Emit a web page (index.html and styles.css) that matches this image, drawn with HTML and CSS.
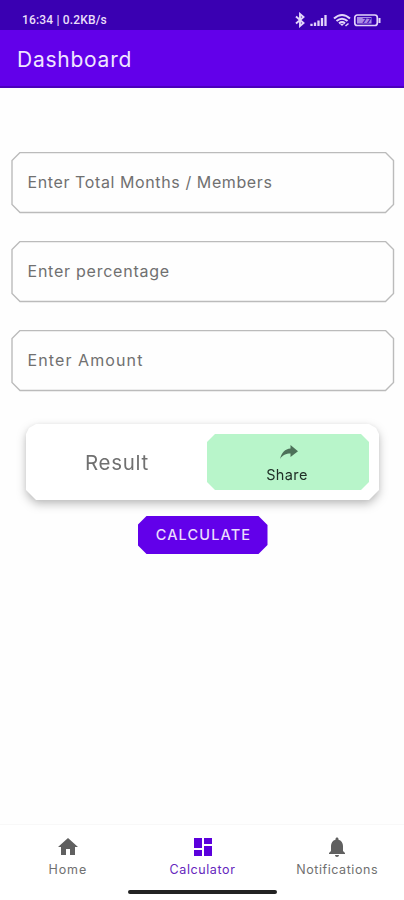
FILE: index.html
```html
<!DOCTYPE html>
<html lang="en">
<head>
<meta charset="utf-8">
<title>Dashboard</title>
<link rel="stylesheet" href="styles.css">
</head>
<body>
<header>
  <div class="status">
    <span>16:34 | 0.2KB/s</span>
    <svg class="indicators" width="90" height="16" viewBox="0 0 90 16" fill="none" stroke="#e2d5fa">
      <path d="M4 4.500 11.500 11 8 14V2L11.500 5 4 11.500" stroke-width="1.900"/>
      <path d="M19.500 14v-2.200M23 14V10.500M26.500 14V8.500M30 14V6M33.500 14V3" stroke-width="2.300"/>
      <path d="M42 6.500Q50-.5 58 6.500M44.500 9Q50 4.500 55.500 9M47 11.300Q50 9 53 11.300" stroke-width="2.100"/>
      <path d="M48 12h4l-2 2z" fill="#e2d5fa" stroke="none"/>
      <path d="M53.500 14l3-2.500" stroke-width="1.500"/>
      <rect x="62.800" y="3" width="22.500" height="10.500" rx="2.500" stroke-width="1.700"/>
      <rect x="65" y="5" width="14.500" height="6.500" fill="#a98be6" stroke="none"/>
      <path d="M87.500 6v5" stroke-width="2"/>
      <text x="70" y="11.300" class="charge">77</text>
    </svg>
  </div>
  <div class="appbar"><h1>Dashboard</h1></div>
</header>
<main>
  <form>
    <label class="field">
      <svg class="outline" width="384" height="62" viewBox="0 0 384 62"><path d="M9 .5H374.500L382.500 8.500V52.500L374.500 60.500H9L1 52.500V8.500Z"/></svg>
      <span class="f1">Enter Total Months / Members</span>
    </label>
    <label class="field">
      <svg class="outline" width="384" height="62" viewBox="0 0 384 62"><path d="M9 .5H374.500L382.500 8.500V52.500L374.500 60.500H9L1 52.500V8.500Z"/></svg>
      <span class="f2">Enter percentage</span>
    </label>
    <label class="field">
      <svg class="outline" width="384" height="62" viewBox="0 0 384 62"><path d="M9 .5H374.500L382.500 8.500V52.500L374.500 60.500H9L1 52.500V8.500Z"/></svg>
      <span class="f3">Enter Amount</span>
    </label>
  </form>
  <div class="card-shadow">
    <section class="card">
      <div class="result">Result</div>
      <div class="share">
        <svg width="20" height="16" viewBox="0 0 20 16"><path d="M1 15C2.500 8.500 6 5 11.500 4.500V1L19 7.200 11.500 13V9.500C7 9.500 3.500 11 1 15Z" fill="#4d7059"/></svg>
        <span>Share</span>
      </div>
    </section>
  </div>
  <div class="calculate"><span>CALCULATE</span></div>
</main>
<nav>
  <div class="tab">
    <svg width="24" height="24" viewBox="0 0 24 24"><path d="M10 20v-6h4v6h5v-8h3L12 3 2 12h3v8z"/></svg>
    <span class="home">Home</span>
  </div>
  <div class="tab active">
    <svg width="24" height="24" viewBox="0 0 24 24"><path d="M3 13h8V3H3zm0 8h8v-6H3zm10 0h8V11h-8zm0-18v6h8V3z"/></svg>
    <span class="calc">Calculator</span>
  </div>
  <div class="tab">
    <svg width="24" height="24" viewBox="0 0 24 24"><path d="M12 22c1.100 0 2-.9 2-2h-4c0 1.100.9 2 2 2zm6-6v-5c0-3.070-1.640-5.640-4.500-6.320V4c0-.83-.67-1.500-1.500-1.500s-1.500.67-1.500 1.500v.68C7.630 5.360 6 7.920 6 11v5l-2 2v1h16v-1z"/></svg>
    <span class="notif">Notifications</span>
  </div>
  <div class="handle"></div>
</nav>
</body>
</html>
```

FILE: styles.css
```css
* { box-sizing: border-box; }
body {
  margin: 0;
  width: 404px;
  height: 900px;
  overflow: hidden;
  display: flex;
  flex-direction: column;
  background: #fefefe;
  font-family: Inter, "Open Sans", sans-serif;
  color: #707070;
}
span { white-space: nowrap; }
.status {
  height: 30px;
  padding: 10px 22px 0 22px;
  display: flex;
  justify-content: space-between;
  background: #3a00b2;
  color: #e9dffa;
  font: 500 12px/20px Roboto, sans-serif;
  letter-spacing: 0.17px;
}
.indicators { margin-top: 2px; }
.charge { font: italic 700 8px Roboto, sans-serif; letter-spacing: 0; fill: #3a00b2; stroke: none; }
.appbar {
  height: 58px;
  padding-left: 17px;
  background: #6200ea;
  border-bottom: 2px solid #4a00bc;
}
h1 {
  margin: 0;
  font-size: 21px;
  line-height: 60px;
  font-weight: 400;
  letter-spacing: 0.75px;
  color: #f0e6ff;
}
main { flex: 1; display: flex; flex-direction: column; }
form {
  display: flex;
  flex-direction: column;
  gap: 27px;
  padding: 64px 9px 0 11px;
}
.field {
  position: relative;
  height: 62px;
  padding-left: 16.500px;
  font-size: 16px;
  line-height: 61px;
}
.outline { position: absolute; left: 0; top: 0; }
.outline path { fill: #fefefe; stroke: #bbb; stroke-width: 1.400px; }
.field span { position: relative; }
.f1 { letter-spacing: 0.6px; }
.f2 { letter-spacing: 0.76px; }
.f3 { letter-spacing: 1.1px; }
.card-shadow {
  margin: 32px 25px 0 26px;
  filter: drop-shadow(0 4px 5px rgba(0, 0, 0, .25)) drop-shadow(0 0 2px rgba(0, 0, 0, .04));
}
.card {
  height: 76px;
  padding: 10px;
  display: flex;
  background: #fff;
  clip-path: polygon(0 10px, 3px 4px, 10px 0, calc(100% - 10px) 0, calc(100% - 3px) 4px, 100% 10px, 100% calc(100% - 10px), calc(100% - 10px) 100%, 10px 100%, 0 calc(100% - 10px));
}
.result {
  flex: 1;
  padding-right: 9px;
  text-align: center;
  font-size: 20.500px;
  line-height: 58px;
  letter-spacing: 0.7px;
}
.share {
  width: 162px;
  height: 56px;
  padding: 9px 2px 0 0;
  display: flex;
  flex-direction: column;
  align-items: center;
  background: #b8f5ca;
  clip-path: polygon(0 8px, 8px 0, calc(100% - 8px) 0, 100% 8px, 100% calc(100% - 8px), calc(100% - 8px) 100%, 8px 100%, 0 calc(100% - 8px));
  color: #203027;
  font-size: 14.500px;
  line-height: 31px;
  letter-spacing: 0.4px;
}
.share svg { flex: none; position: relative; left: 2px; top: 1px; }
.calculate {
  align-self: center;
  width: 130px;
  height: 38px;
  margin: 16px 0 0 1px;
  background: #6200ea;
  clip-path: polygon(0 9px, 9px 0, calc(100% - 9px) 0, 100% 9px, 100% calc(100% - 9px), calc(100% - 9px) 100%, 9px 100%, 0 calc(100% - 9px));
  color: #eadcfd;
  text-align: center;
  font-size: 14.500px;
  font-weight: 500;
  line-height: 38px;
  letter-spacing: 1.15px;
}
.calculate span { padding-left: 2px; }
nav {
  position: relative;
  height: 76px;
  display: flex;
  background: #fff;
  border-top: 1px solid #f8f8f8;
}
.tab {
  flex: 1;
  padding: 10px 0 0 1px;
  display: flex;
  flex-direction: column;
  align-items: center;
  color: #707070;
  fill: #606060;
  font-size: 12.500px;
  line-height: 21px;
}
.active { color: #6526bd; fill: #5b00dc; }
.home { letter-spacing: 0.9px; }
.calc { letter-spacing: 0.6px; }
.notif { letter-spacing: 0.55px; }
.handle {
  position: absolute;
  left: 128px;
  top: 65px;
  width: 149px;
  height: 4px;
  border-radius: 2px;
  background: #222;
}
```
